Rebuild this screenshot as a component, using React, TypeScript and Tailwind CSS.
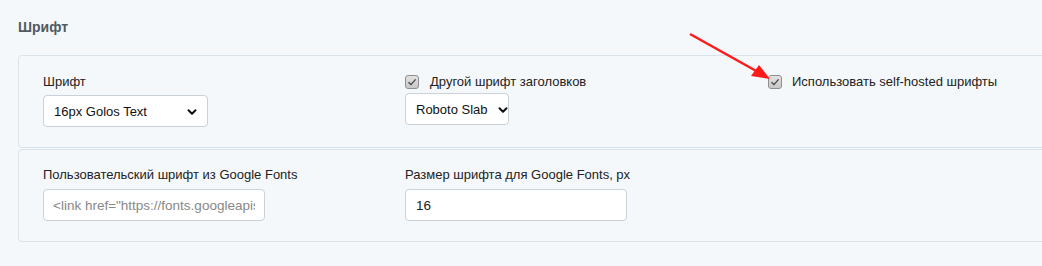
import { ChevronDown } from 'lucide-react'

const Check = () => (
  <span className="flex h-[14px] w-[14px] items-center justify-center rounded-[3px] border border-[#8f8f8f] bg-gradient-to-b from-[#e2e2e2] to-[#c8c8c8]">
    <svg width="10" height="10" viewBox="0 0 10 10">
      <path d="M1.5 5.2 L4 7.6 L8.6 2.4" fill="none" stroke="#4a4a4a" strokeWidth="1.4" />
    </svg>
  </span>
)

const Select = ({ value, width }: { value: string; width: string }) => (
  <div
    className={`flex h-8 items-center justify-between gap-[8px] whitespace-nowrap rounded-[4px] border border-[#c9d1d9] bg-white pl-[10px] pr-[8px] pt-[1px] text-[13px] text-[#111] ${width}`}
  >
    <span>{value}</span>
    <ChevronDown size={14} strokeWidth={3.5} className="shrink-0 text-[#111]" />
  </div>
)

export default function App() {
  return (
    <div
      className="relative h-[266px] w-[1042px] overflow-hidden bg-[#f5f8fa] text-[13px] text-[#222]"
      style={{ fontFamily: '"Liberation Sans", Arial, sans-serif' }}
    >
      <div className="pt-[19px] pl-[18px]">
        <h2 className="text-[14px] font-bold leading-[17px] text-[#505a63]">Шрифт</h2>
      </div>
      <div className="mt-[19px] ml-[18px] mr-[-20px]">
        <div className="grid h-[93px] grid-cols-[362px_363px_1fr] rounded-l-[4px] border border-[#dbe3ea] px-[24px] pt-[17px]">
          <div className="flex flex-col">
            <label className="h-[17px] leading-[17px]">Шрифт</label>
            <div className="mt-[5px]">
              <Select value="16px Golos Text" width="w-[165px]" />
            </div>
          </div>
          <div className="flex flex-col">
            <div className="flex h-[17px] items-center gap-[11px]">
              <Check />
              <span>Другой шрифт заголовков</span>
            </div>
            <div className="mt-[3px]">
              <Select value="Roboto Slab" width="w-[104px]" />
            </div>
          </div>
          <div className="flex flex-col">
            <div className="flex h-[17px] items-center gap-[10px]">
              <Check />
              <span>Использовать self-hosted шрифты</span>
            </div>
          </div>
        </div>
        <div className="mt-[1px] grid h-[93px] grid-cols-[362px_1fr] rounded-l-[4px] border border-[#dbe3ea] px-[24px] pt-[16px]">
          <div className="flex flex-col">
            <label className="h-[17px] leading-[17px]">Пользовательский шрифт из Google Fonts</label>
            <input
              readOnly
              placeholder={'<link href="https://fonts.googleapis.com/css2"'}
              className="mt-[6px] h-8 w-[222px] rounded-[4px] border border-[#c9d1d9] bg-white px-[9px] text-[13.5px] text-[#222] outline-none placeholder:text-[#888]"
            />
          </div>
          <div className="flex flex-col">
            <label className="h-[17px] leading-[17px]">Размер шрифта для Google Fonts, px</label>
            <input
              readOnly
              value="16"
              className="mt-[6px] h-8 w-[222px] rounded-[4px] border border-[#c9d1d9] bg-white px-[10px] text-[13.5px] text-[#222] outline-none"
            />
          </div>
        </div>
      </div>
      <svg className="pointer-events-none absolute left-0 top-0" width="1042" height="266">
        <line x1="690" y1="34" x2="758" y2="72" stroke="#ff1a1a" strokeWidth="2.5" />
        <polygon points="770,79 751,76 759,65" fill="#ff1a1a" />
      </svg>
    </div>
  )
}
